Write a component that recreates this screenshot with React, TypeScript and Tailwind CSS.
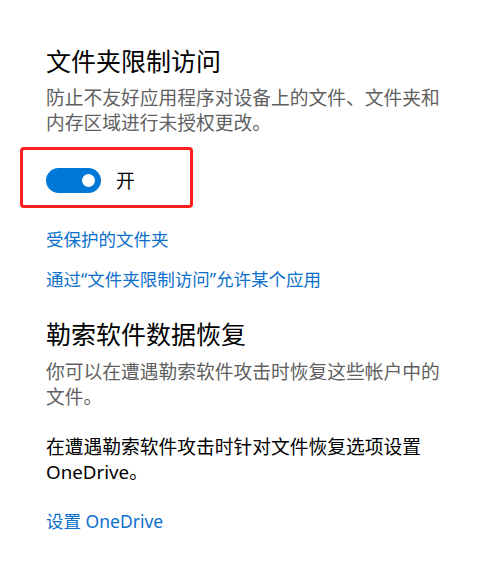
export default function App() {
  const font = { fontFamily: '"Noto Sans", "Noto Sans CJK SC", sans-serif' }

  return (
    <main
      className="min-h-[586px] w-full bg-white pl-[46px] pt-[45px] text-black"
      style={font}
    >
      {/* Controlled folder access */}
      <section className="w-[400px]">
        <h2 className="text-[25px] leading-[32px] font-normal">文件夹限制访问</h2>
        <p className="mt-[8px] text-[18.75px] leading-[25px] text-[#5f5f5f]">
          防止不友好应用程序对设备上的文件、文件夹和内存区域进行未授权更改。
        </p>
      </section>

      <div className="-ml-[26px] mt-[12px] flex h-[61px] w-[173px] items-center gap-[15px] rounded-[4px] border-[3px] border-[#ff1f1f] pl-[23px] pt-[6px]">
        <div className="flex h-[25px] w-[55px] items-center justify-end rounded-full bg-[#0078d7] pr-[6px]">
          <div className="h-[13px] w-[13px] rounded-full bg-white" />
        </div>
        <span className="text-[18.75px] leading-[25px]">开</span>
      </div>

      <div className="mt-[19px] flex flex-col gap-[15px] text-[17.5px] leading-[25px] text-[#0b6fcc]">
        <a className="w-fit cursor-pointer">受保护的文件夹</a>
        <a className="w-fit cursor-pointer">通过“文件夹限制访问”允许某个应用</a>
      </div>

      {/* Ransomware data recovery */}
      <section className="mt-[26px] w-[400px]">
        <h2 className="text-[25px] leading-[32px] font-normal">勒索软件数据恢复</h2>
        <p className="mt-[9px] text-[18.75px] leading-[25px] text-[#5f5f5f]">
          你可以在遭遇勒索软件攻击时恢复这些帐户中的文件。
        </p>
        <p className="mt-[25px] text-[18.75px] leading-[25px]">
          在遭遇勒索软件攻击时针对文件恢复选项设置 OneDrive。
        </p>
        <a className="mt-[25px] block w-fit cursor-pointer text-[17.5px] leading-[25px] text-[#0b6fcc]">
          设置 OneDrive
        </a>
      </section>
    </main>
  )
}
